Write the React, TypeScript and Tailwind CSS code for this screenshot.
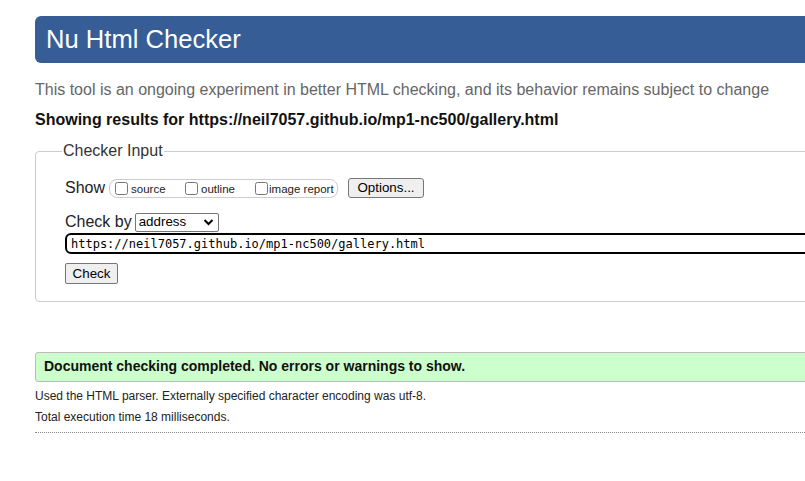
import React from 'react'

const Checker = () => {
  return (
    <div className="w-[805px] h-[481px] overflow-hidden bg-white" style={{ fontFamily: '"Liberation Sans", Arial, sans-serif' }}>
      <div className="ml-[35px] w-[1100px]">
        {/* header */}
        <h1 className="mt-4 h-[47px] bg-[#365d95] rounded-l-md pl-[11px] flex items-center text-white text-[25.6px] leading-none">
          Nu Html Checker
        </h1>

        <p className="mt-[18px] text-[16px] leading-[18px] text-[#666]">
          This tool is an ongoing experiment in better HTML checking, and its behavior remains subject to change
        </p>
        <p className="mt-[12px] text-[16px] leading-[18px] font-bold text-[#111]">
          Showing results for https://neil7057.github.io/mp1-nc500/gallery.html
        </p>

        {/* checker input */}
        <fieldset className="mt-[13px] border border-[#ccc] rounded-l-[4px] pl-[29px] pb-[16px] pt-[18px] text-[16px] text-[#222]">
          <legend className="ml-[-3px] px-[1px] text-[16px] leading-[18px] text-[#333]">Checker Input</legend>

          <div className="flex items-center h-[20px]">
            <span className="mr-[4px]">Show</span>
            <div className="flex items-center h-[19px] w-[229px] border border-[#ccc] rounded-[8px] pl-[5px] text-[11.5px] text-[#222]">
              <label className="flex items-center w-[70px]">
                <input type="checkbox" className="w-[13px] h-[13px] mr-[3px]" />
                <span className="mt-[3px]">source</span>
              </label>
              <label className="flex items-center w-[70px]">
                <input type="checkbox" className="w-[13px] h-[13px] mr-[3px]" />
                <span className="mt-[3px]">outline</span>
              </label>
              <label className="flex items-center">
                <input type="checkbox" className="w-[13px] h-[13px] mr-[1px]" />
                <span className="mt-[3px]">image report</span>
              </label>
            </div>
            <button className="ml-[10px] h-[20px] w-[76px] bg-[#efefef] border border-[#767676] rounded-[3px] text-[13.33px] leading-none text-black">
              Options...
            </button>
          </div>

          <div className="flex items-center h-[20px] mt-[14px]">
            <span className="mr-[3px]">Check by</span>
            <div className="flex items-center justify-between h-[19px] w-[84px] border border-[#767676] rounded-[2px] pl-[3px] pr-[4px] text-[13.33px] text-black">
              address
              <svg width="11" height="8" viewBox="0 0 11 8" fill="none">
                <path d="M1.5 2 L5.5 6 L9.5 2" stroke="#000" strokeWidth="2" />
              </svg>
            </div>
          </div>

          <div className="mt-[1px] h-[21px] border-2 border-black rounded-l-[6px] flex items-center pl-[4px] text-[12px] text-black" style={{ fontFamily: '"DejaVu Sans Mono", "Liberation Mono", monospace' }}>
            https://neil7057.github.io/mp1-nc500/gallery.html
          </div>

          <button className="mt-[9px] h-[21px] w-[53px] bg-[#efefef] border border-[#767676] rounded-[2px] text-[13.33px] leading-none text-black">
            Check
          </button>
        </fieldset>

        {/* result */}
        <div className="mt-[50px] h-[30px] bg-[#ccffcc] border border-[#bbb] rounded-l-[3px] flex items-center pl-[8px] text-[14px] font-bold text-[#111]">
          Document checking completed. No errors or warnings to show.
        </div>
        <p className="mt-[7px] text-[12px] leading-[14px] text-[#222]">
          Used the HTML parser. Externally specified character encoding was utf-8.
        </p>
        <p className="mt-[7px] text-[12px] leading-[14px] text-[#222]">
          Total execution time 18 milliseconds.
        </p>
        <div className="mt-[8px] border-t border-dotted border-[#888]" />
      </div>
    </div>
  )
}

export default Checker
